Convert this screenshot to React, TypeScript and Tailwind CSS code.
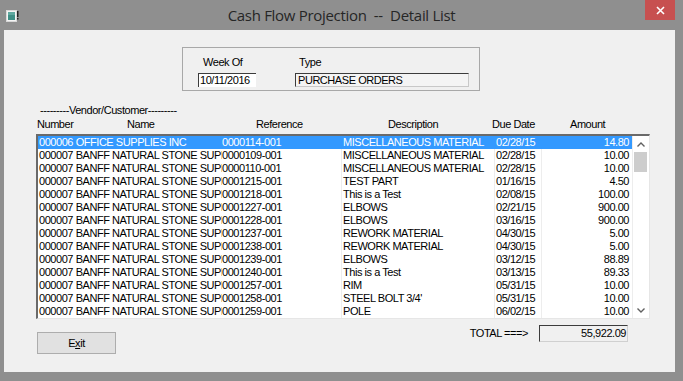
import React from 'react';

type Row = {
  num: string;
  name: string;
  ref: string;
  desc: string;
  due: string;
  amount: string;
};

const rows: Row[] = [
  { num: '000006', name: 'OFFICE SUPPLIES INC', ref: '0000114-001', desc: 'MISCELLANEOUS MATERIAL', due: '02/28/15', amount: '14.80' },
  { num: '000007', name: 'BANFF NATURAL STONE SUPPLY', ref: '0000109-001', desc: 'MISCELLANEOUS MATERIAL', due: '02/28/15', amount: '10.00' },
  { num: '000007', name: 'BANFF NATURAL STONE SUPPLY', ref: '0000110-001', desc: 'MISCELLANEOUS MATERIAL', due: '02/28/15', amount: '10.00' },
  { num: '000007', name: 'BANFF NATURAL STONE SUPPLY', ref: '0001215-001', desc: 'TEST PART', due: '01/16/15', amount: '4.50' },
  { num: '000007', name: 'BANFF NATURAL STONE SUPPLY', ref: '0001218-001', desc: 'This is a Test', due: '02/08/15', amount: '100.00' },
  { num: '000007', name: 'BANFF NATURAL STONE SUPPLY', ref: '0001227-001', desc: 'ELBOWS', due: '02/21/15', amount: '900.00' },
  { num: '000007', name: 'BANFF NATURAL STONE SUPPLY', ref: '0001228-001', desc: 'ELBOWS', due: '03/16/15', amount: '900.00' },
  { num: '000007', name: 'BANFF NATURAL STONE SUPPLY', ref: '0001237-001', desc: 'REWORK MATERIAL', due: '04/30/15', amount: '5.00' },
  { num: '000007', name: 'BANFF NATURAL STONE SUPPLY', ref: '0001238-001', desc: 'REWORK MATERIAL', due: '04/30/15', amount: '5.00' },
  { num: '000007', name: 'BANFF NATURAL STONE SUPPLY', ref: '0001239-001', desc: 'ELBOWS', due: '03/12/15', amount: '88.89' },
  { num: '000007', name: 'BANFF NATURAL STONE SUPPLY', ref: '0001240-001', desc: 'This is a Test', due: '03/13/15', amount: '89.33' },
  { num: '000007', name: 'BANFF NATURAL STONE SUPPLY', ref: '0001257-001', desc: 'RIM', due: '05/31/15', amount: '10.00' },
  { num: '000007', name: 'BANFF NATURAL STONE SUPPLY', ref: '0001258-001', desc: "STEEL BOLT 3/4'", due: '05/31/15', amount: '10.00' },
  { num: '000007', name: 'BANFF NATURAL STONE SUPPLY', ref: '0001259-001', desc: 'POLE', due: '06/02/15', amount: '10.00' },
];

const AppIcon = () => (
  <svg width="13" height="12" viewBox="0 0 13 12">
    <rect x="0.5" y="0.5" width="10" height="11" fill="#f4f4f4" stroke="#d8d8d8" />
    <rect x="2" y="2" width="7" height="8" fill="#3f8f86" />
    <rect x="2" y="2" width="7" height="3" fill="#5fa9a0" />
    <rect x="11" y="1" width="1.5" height="6" fill="#222" />
    <rect x="11" y="8" width="1.5" height="1.5" fill="#222" />
  </svg>
);

const Chevron = ({ up }: { up?: boolean }) => (
  <svg width="8" height="5" viewBox="0 0 8 5">
    <path d={up ? 'M0.5 4.5 L4 1 L7.5 4.5' : 'M0.5 0.5 L4 4 L7.5 0.5'} fill="none" stroke="#606060" strokeWidth="1.4" />
  </svg>
);

export default function App() {
  return (
    <div className="w-[683px] h-[381px] bg-[#8f8f8f] flex flex-col overflow-hidden font-['Liberation_Sans',Arial,sans-serif] text-[11px] tracking-[-0.45px] text-black">
      {/* title bar */}
      <div className="h-[30px] grid grid-cols-[1fr_auto_1fr] shrink-0">
        <div className="pl-[6px] pt-[10px]">
          <AppIcon />
        </div>
        <div className="pt-[5px] whitespace-pre font-['Open_Sans',sans-serif] text-[15px] leading-[20px] tracking-[-0.3px] text-[#262626]">
          Cash Flow Projection  --  Detail List
        </div>
        <div className="flex justify-end pr-[8px]">
          <div className="w-[30px] h-[20px] bg-[#c75050] flex items-center justify-center">
            <svg width="9" height="9" viewBox="0 0 9 9">
              <path d="M1 1 L8 8 M8 1 L1 8" stroke="#fff" strokeWidth="1.6" />
            </svg>
          </div>
        </div>
      </div>

      {/* client area */}
      <div className="flex-1 ml-[4px] mr-[8px] mb-[9px] bg-[#f0f0f0] flex flex-col">
        {/* week/type group */}
        <div className="mt-[17px] ml-[178px] w-[298px] h-[44px] border border-[#a8a8a8] flex">
          <div className="ml-[15px] w-[58px] pt-[8px]">
            <div className="pl-[5px] h-[12px] leading-[12px]">Week Of</div>
            <div className="mt-[5px] h-[14px] bg-white border-t border-l border-[#3c3c3c] pl-[1px] leading-[13px]">
              10/11/2016
            </div>
          </div>
          <div className="ml-[39px] w-[174px] pt-[8px]">
            <div className="pl-[4px] h-[12px] leading-[12px]">Type</div>
            <div className="mt-[5px] h-[14px] bg-[#f4f4f4] border-t border-l border-t-[#3c3c3c] border-l-[#3c3c3c] border-r border-b border-r-[#c8c8c8] border-b-[#c8c8c8] pl-[2px] leading-[13px]">
              PURCHASE ORDERS
            </div>
          </div>
        </div>

        {/* column captions */}
        <div className="mt-[13px] pl-[36px] h-[12px] leading-[12px]">---------Vendor/Customer---------</div>
        <div className="mt-[2px] pl-[33px] h-[12px] leading-[12px] grid grid-cols-[90px_129px_132px_104px_78px_auto]">
          <span>Number</span>
          <span>Name</span>
          <span>Reference</span>
          <span>Description</span>
          <span>Due Date</span>
          <span>Amount</span>
        </div>

        {/* list */}
        <div className="mt-[4px] ml-[32px] w-[614px] h-[185px] flex bg-white border-t-2 border-l-2 border-t-[#6a6a6a] border-l-[#6a6a6a] border-r border-b border-r-[#e6e6e6] border-b-[#e6e6e6]">
          <div className="flex flex-col">
            {rows.map((r, i) => {
              const sel = i === 0;
              return (
                <div
                  key={i}
                  className={`h-[13px] leading-[13px] flex whitespace-nowrap ${sel ? 'bg-[#3399ff] text-white' : ''}`}
                >
                  <div className="w-[184px] overflow-hidden pl-[1px]">
                    {r.num} {r.name}
                  </div>
                  <div className="w-[119px] overflow-hidden">{r.ref}</div>
                  <div className={`w-[153px] overflow-hidden pl-[1px] border-l ${sel ? 'border-[#3399ff]' : 'border-[#ededed]'}`}>
                    {r.desc}
                  </div>
                  <div className={`w-[47px] overflow-hidden pl-[1px] border-l ${sel ? 'border-[#3399ff]' : 'border-[#ededed]'}`}>
                    {r.due}
                  </div>
                  <div className={`w-[91px] overflow-hidden pr-[3px] text-right border-l ${sel ? 'border-[#3399ff]' : 'border-[#ededed]'}`}>
                    {r.amount}
                  </div>
                </div>
              );
            })}
          </div>
          {/* scrollbar */}
          <div className="w-[17px] flex flex-col border-l border-[#ededed]">
            <div className="h-[16px] flex items-center justify-center">
              <Chevron up />
            </div>
            <div className="ml-[1px] mr-[2px] h-[20px] bg-[#cdcdcd]" />
            <div className="flex-1" />
            <div className="h-[16px] flex items-center justify-center">
              <Chevron />
            </div>
          </div>
        </div>

        {/* bottom */}
        <div className="mt-[6px] flex items-start">
          <div className="mt-[7px] ml-[33px] w-[79px] h-[22px] bg-[#e1e1e1] border border-[#adadad] flex items-center justify-center">
            <span>
              E<span className="underline">x</span>it
            </span>
          </div>
          <div className="ml-auto mr-[47px] flex items-center">
            <span className="mr-[11px]">TOTAL ===&gt;</span>
            <div className="w-[89px] h-[17px] border-t border-l border-t-[#3c3c3c] border-l-[#3c3c3c] border-r border-b border-r-[#d0d0d0] border-b-[#d0d0d0] text-right pr-[1px] leading-[15px]">
              55,922.09
            </div>
          </div>
        </div>
      </div>
    </div>
  );
}
